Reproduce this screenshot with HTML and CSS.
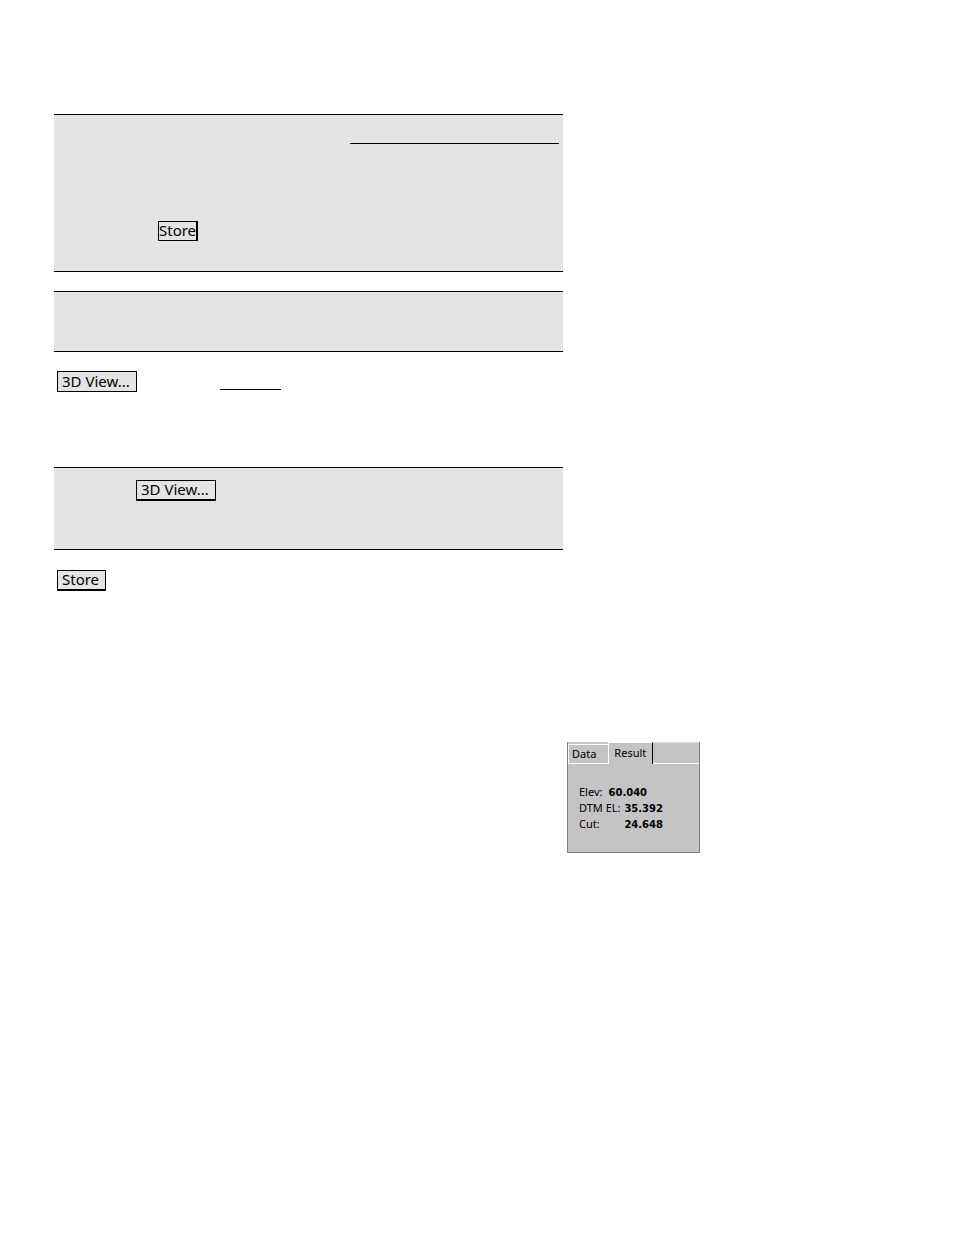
FILE: index.html
```
<!DOCTYPE html>
<html lang="en">
<head>
    <meta charset="UTF-8">
    <meta name="viewport" content="width=device-width, initial-scale=1.0">
    <title>Document</title>
    <link rel="stylesheet" href="styles.css">
</head>
<body>
    <main class="page">
        <section class="note note-top">
            <div class="line"></div>
            <button class="key tight" type="button">Store</button>
        </section>
        <section class="note note-small"></section>
        <div class="step">
            <button class="key" type="button">3D View...</button>
            <span class="blank"></span>
        </div>
        <section class="note note-view">
            <button class="key raised" type="button">3D View...</button>
        </section>
        <div class="step-store">
            <button class="key raised" type="button">Store</button>
        </div>
        <section class="result">
            <div class="tabs" role="tablist">
                <button class="tab" type="button" role="tab" aria-selected="false">Data</button>
                <button class="tab active" type="button" role="tab" aria-selected="true">Result</button>
                <div class="tab-rest"></div>
            </div>
            <dl class="values">
                <div class="row first"><dt>Elev:</dt><dd>60.040</dd></div>
                <div class="row"><dt>DTM EL:</dt><dd>35.392</dd></div>
                <div class="row"><dt>Cut:</dt><dd>24.648</dd></div>
            </dl>
        </section>
    </main>
</body>
</html>
```
FILE: styles.css
```
* {
    box-sizing: border-box;
}
body {
    margin: 0;
    background-color: #ffffff;
    font-family: "Noto Sans", sans-serif;
    color: #000000;
}
.page {
    display: grid;
    grid-template-columns: minmax(0, 509fr) minmax(0, 337fr);
    padding: 114px 54px 40px;
}
.page > * {
    grid-column: 1;
}
.note {
    background-color: #e4e4e4;
    border-top: 1px solid #000000;
    border-bottom: 1px solid #000000;
}
.note-top {
    padding: 28px 4px 30px 104px;
}
.line {
    width: 52%;
    margin-left: auto;
    margin-bottom: 77px;
    border-bottom: 1px solid #000000;
}
.note-small {
    margin-top: 19px;
    min-height: 61px;
}
.note-view {
    margin-top: 75px;
    padding: 12px 82px 48px;
}
.key {
    display: block;
    height: 21px;
    padding: 0 6px 2px 4px;
    background-color: #e4e4e4;
    border: 1px solid #000000;
    font-family: inherit;
    font-size: 15px;
    line-height: 16px;
    color: #000000;
}
.tight {
    height: 20px;
    padding: 0 0 2px;
    border-right-width: 2px;
}
.raised {
    border-bottom-width: 2px;
}
.step {
    display: flex;
    align-items: flex-end;
    gap: 83px;
    margin-top: 19px;
    padding-left: 3px;
}
.blank {
    width: 61px;
    margin-bottom: 2px;
    border-bottom: 1px solid #000000;
}
.step-store {
    margin-top: 20px;
    padding-left: 3px;
}

/* result window */
.page > .result {
    grid-column: 2;
    grid-row: 6;
    justify-self: start;
    width: 133px;
    margin-top: 151px;
    margin-left: 4px;
    background-color: #c5c3c6;
    border-right: 1px solid #808080;
    border-bottom: 1px solid #808080;
    border-left: 1px solid #808080;
}
.tabs {
    display: flex;
    align-items: flex-end;
}
.tab {
    height: 20px;
    padding: 0 12px 0 3px;
    background-color: #c5c3c6;
    border: 1px solid #ffffff;
    border-right: none;
    font-family: inherit;
    font-size: 11px;
    line-height: 18px;
    color: #000000;
}
.tab.active {
    height: 22px;
    padding: 0 6px 2px 5px;
    border-right: 1px solid #000000;
    border-bottom: none;
}
.tab-rest {
    flex: 1;
    height: 22px;
    border-top: 1px solid #dddddd;
    border-bottom: 1px solid #ffffff;
}
.values {
    margin: 0;
    padding: 20px 11px;
    font-size: 11px;
    line-height: 16px;
}
.row {
    display: flex;
    justify-content: space-between;
    align-items: baseline;
    width: 84px;
    height: 16px;
}
.row.first {
    justify-content: flex-start;
    gap: 6px;
}
.row dd {
    margin: 0;
    font-family: "DejaVu Sans", sans-serif;
    font-size: 10px;
    font-weight: bold;
}
```
